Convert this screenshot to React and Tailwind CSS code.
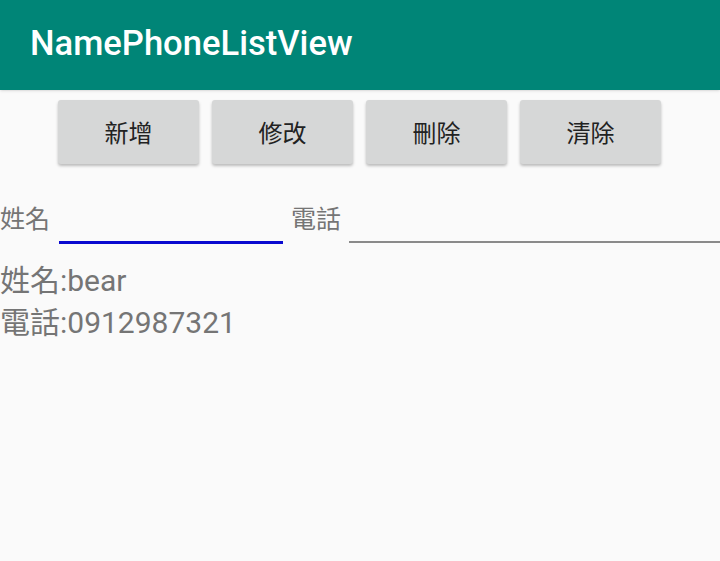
// App.jsx — NamePhoneListView screen

const font = { fontFamily: 'Roboto, "Noto Sans CJK TC", sans-serif' }

const buttons = ['新增', '修改', '刪除', '清除']

export default function App() {
  return (
    <div className="w-[720px] h-[561px] bg-[#fafafa] overflow-hidden" style={font}>
      {/* App bar */}
      <div className="h-[90px] bg-[#008577] flex items-center pl-[30px] shadow-sm">
        <h1 className="text-white text-[34.6px] font-medium leading-none -mt-[4px]">NamePhoneListView</h1>
      </div>

      {/* Buttons */}
      <div className="flex gap-[13px] pl-[58px] pt-[10px]">
        {buttons.map(function (b) {
          return (
            <button
              key={b}
              className="w-[141px] h-[64px] bg-[#d6d7d7] rounded-[3px] shadow-[0_2px_3px_rgba(0,0,0,0.25)] text-[24px] text-[#222] flex items-center justify-center pt-[3px]"
            >
              {b}
            </button>
          )
        })}
      </div>

      {/* Inputs */}
      <div className="flex items-end mt-[30px] h-[50px]">
        <span className="text-[25px] text-[#757575] leading-none mb-[12px] w-[59px]">姓名</span>
        <div className="w-[224px] border-b-[3px] border-[#0a0ad0] h-full" />
        <span className="text-[25px] text-[#757575] leading-none mb-[12px] ml-[8px] w-[58px]">電話</span>
        <div className="flex-1 border-b-2 border-[#8a8a8a] h-full mb-[1px]" />
      </div>

      {/* Data */}
      <div className="mt-[16px] text-[30px] text-[#757575] leading-[42px]">
        <p>姓名:bear</p>
        <p>電話:0912987321</p>
      </div>
    </div>
  )
}
